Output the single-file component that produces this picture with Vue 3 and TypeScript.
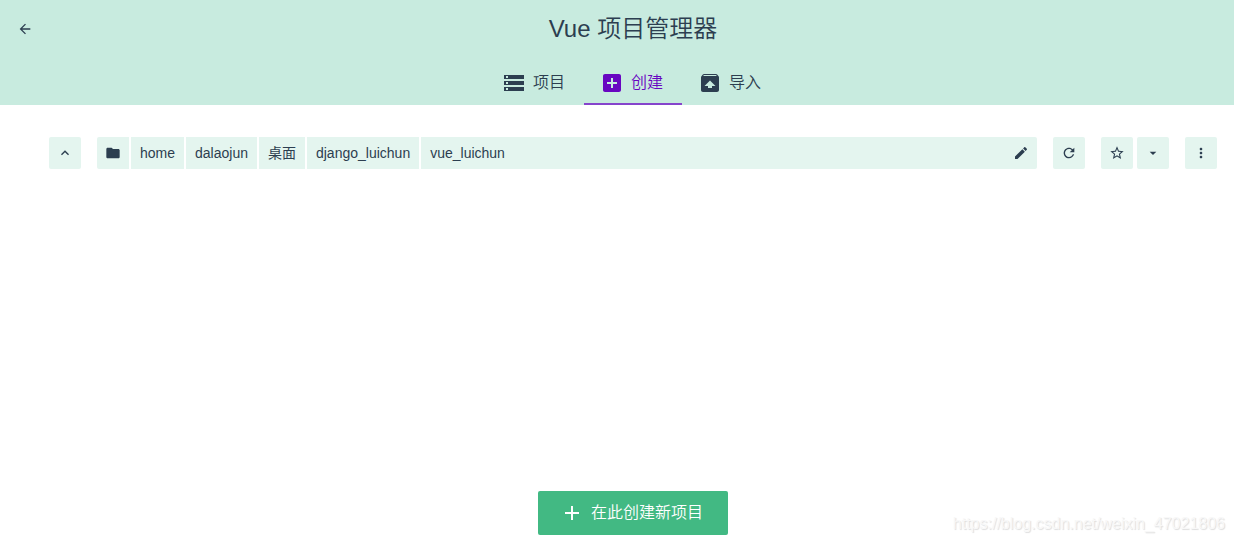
<script setup lang="ts">
import { ref } from 'vue'

interface Tab {
  id: string
  label: string
  icon: string
}

const icons = {
  back: 'M20 11H7.83l5.59-5.59L12 4l-8 8 8 8 1.41-1.41L7.83 13H20v-2z',
  up: 'M12 8l-6 6 1.41 1.41L12 10.83l4.59 4.58L18 14z',
  folder: 'M10 4H4c-1.1 0-1.99.9-1.99 2L2 18c0 1.1.9 2 2 2h16c1.1 0 2-.9 2-2V8c0-1.1-.9-2-2-2h-8l-2-2z',
  edit: 'M3 17.25V21h3.75L17.81 9.94l-3.75-3.75L3 17.25zM20.71 7.04c.39-.39.39-1.02 0-1.41l-2.34-2.34c-.39-.39-1.02-.39-1.41 0l-1.83 1.83 3.75 3.75 1.83-1.83z',
  refresh: 'M17.65 6.35C16.2 4.9 14.21 4 12 4c-4.42 0-7.99 3.58-7.99 8s3.57 8 7.99 8c3.73 0 6.84-2.55 7.73-6h-2.08c-.82 2.33-3.04 4-5.65 4-3.31 0-6-2.69-6-6s2.69-6 6-6c1.66 0 3.14.69 4.22 1.78L13 11h7V4l-2.35 2.35z',
  star: 'M22 9.24l-7.19-.62L12 2 9.19 8.63 2 9.24l5.46 4.73L5.82 21 12 17.27 18.18 21l-1.63-7.03L22 9.24zM12 15.4l-3.76 2.27 1-4.28-3.32-2.88 4.38-.38L12 6.1l1.71 4.04 4.38.38-3.32 2.88 1 4.28L12 15.4z',
  down: 'M7 10l5 5 5-5z',
  more: 'M12 8c1.1 0 2-.9 2-2s-.9-2-2-2-2 .9-2 2 .9 2 2 2zm0 2c-1.1 0-2 .9-2 2s.9 2 2 2 2-.9 2-2-.9-2-2-2zm0 6c-1.1 0-2 .9-2 2s.9 2 2 2 2-.9 2-2-.9-2-2-2z',
  plus: 'M19 13h-6v6h-2v-6H5v-2h6V5h2v6h6v2z'
}

const tabs: Tab[] = [
  {
    id: 'projects',
    label: '项目',
    icon: 'M2 20h20v-4H2v4zm2-3h2v2H4v-2zM2 4v4h20V4H2zm4 3H4V5h2v2zm-4 7h20v-4H2v4zm2-3h2v2H4v-2z'
  },
  {
    id: 'create',
    label: '创建',
    icon: 'M19 3H5c-1.11 0-2 .9-2 2v14c0 1.1.89 2 2 2h14c1.1 0 2-.9 2-2V5c0-1.1-.9-2-2-2zm-2 10h-4v4h-2v-4H7v-2h4V7h2v4h4v2z'
  },
  {
    id: 'import',
    label: '导入',
    icon: 'M20.55 5.22l-1.39-1.68C18.88 3.21 18.47 3 18 3H6c-.47 0-.88.21-1.15.55L3.46 5.22C3.17 5.57 3 6.01 3 6.5V19c0 1.1.89 2 2 2h14c1.1 0 2-.9 2-2V6.5c0-.49-.17-.93-.45-1.28zM12 9.5l5.5 5.5H14v2h-4v-2H6.5L12 9.5zM5.12 5l.82-1h12l.93 1H5.12z'
  }
]

const activeTab = ref('create')
const folders = ['home', 'dalaojun', '桌面', 'django_luichun', 'vue_luichun']
</script>

<template>
  <div class="page">
    <header class="header">
      <div class="title-bar">
        <button class="back" type="button" aria-label="返回">
          <svg class="icon" viewBox="0 0 24 24"><path :d="icons.back" /></svg>
        </button>
        <h1 class="title">Vue 项目管理器</h1>
      </div>
      <nav class="tabs">
        <button
          v-for="tab in tabs"
          :key="tab.id"
          type="button"
          class="tab"
          :class="{ active: tab.id === activeTab }"
          @click="activeTab = tab.id"
        >
          <svg class="icon large" viewBox="0 0 24 24"><path :d="tab.icon" /></svg>
          <span>{{ tab.label }}</span>
        </button>
      </nav>
    </header>

    <main class="content">
      <div class="toolbar">
        <button class="square" type="button" aria-label="上级目录">
          <svg class="icon" viewBox="0 0 24 24"><path :d="icons.up" /></svg>
        </button>
        <div class="path">
          <button class="square folder" type="button" aria-label="根目录">
            <svg class="icon" viewBox="0 0 24 24"><path :d="icons.folder" /></svg>
          </button>
          <button v-for="name in folders" :key="name" class="segment" type="button">{{ name }}</button>
          <button class="square edit" type="button" aria-label="编辑路径">
            <svg class="icon" viewBox="0 0 24 24"><path :d="icons.edit" /></svg>
          </button>
        </div>
        <button class="square" type="button" aria-label="刷新">
          <svg class="icon" viewBox="0 0 24 24"><path :d="icons.refresh" /></svg>
        </button>
        <div class="favorites">
          <button class="square" type="button" aria-label="收藏">
            <svg class="icon" viewBox="0 0 24 24"><path :d="icons.star" /></svg>
          </button>
          <button class="square" type="button" aria-label="收藏列表">
            <svg class="icon" viewBox="0 0 24 24"><path :d="icons.down" /></svg>
          </button>
        </div>
        <button class="square" type="button" aria-label="更多">
          <svg class="icon" viewBox="0 0 24 24"><path :d="icons.more" /></svg>
        </button>
      </div>
      <div class="actions">
        <button class="create" type="button">
          <svg class="icon large" viewBox="0 0 24 24"><path :d="icons.plus" /></svg>
          <span>在此创建新项目</span>
        </button>
      </div>
    </main>
    <div class="watermark">https://blog.csdn.net/weixin_47021806</div>
  </div>
</template>

<style>
body {
  background: #fff;
}
</style>

<style scoped>
.page {
  position: relative;
  box-sizing: border-box;
  min-height: 100vh;
  display: flex;
  flex-direction: column;
  font-family: "Liberation Sans", "Noto Sans CJK SC", sans-serif;
  font-size: 16px;
  color: #2c3e50;
}

button {
  margin: 0;
  padding: 0;
  border: 0;
  background: transparent;
  color: inherit;
  font: inherit;
  cursor: pointer;
}

.icon {
  display: block;
  flex: none;
  width: 16px;
  height: 16px;
  fill: currentColor;
}

.icon.large {
  width: 24px;
  height: 24px;
}

.header {
  background: #c8ebdf;
}

.title-bar {
  display: flex;
  align-items: center;
  height: 58px;
  padding: 0 9px;
}

.back {
  display: flex;
  align-items: center;
  justify-content: center;
  width: 32px;
  height: 32px;
}

.title {
  flex: 1;
  margin: 0;
  font-size: 24px;
  line-height: 32px;
  font-weight: 350;
  text-align: center;
}

.tabs {
  display: flex;
  justify-content: center;
  margin-left: 32px;
  padding-top: 3px;
}

.tab {
  display: flex;
  align-items: center;
  gap: 7px;
  box-sizing: border-box;
  height: 44px;
  padding: 2px 19px 0 16px;
  border-bottom: 2px solid transparent;
  line-height: 24px;
  font-weight: 350;
}

.tab.active {
  color: #6806c1;
  border-bottom-color: #8644cc;
}

.content {
  flex: 1;
  display: flex;
  flex-direction: column;
  justify-content: space-between;
  padding: 32px 17px 7px 49px;
}

.toolbar {
  display: flex;
  gap: 16px;
}

.square {
  display: flex;
  align-items: center;
  justify-content: center;
  flex: none;
  width: 32px;
  height: 32px;
  border-radius: 2px;
  background: #e4f5ef;
}

.path {
  flex: 1;
  display: flex;
  gap: 2px;
  min-width: 0;
  border-radius: 2px;
  overflow: hidden;
}

.path .square {
  border-radius: 0;
}

.segment {
  height: 32px;
  padding: 0 9px;
  background: #e4f5ef;
  font-size: 14px;
  line-height: 32px;
  white-space: nowrap;
}

.segment:nth-last-child(2) {
  flex: 1;
  text-align: left;
}

.edit {
  margin-left: -2px;
}

.favorites {
  display: flex;
  gap: 4px;
}

.actions {
  display: flex;
  justify-content: center;
}

.create {
  display: flex;
  align-items: center;
  gap: 7px;
  height: 44px;
  padding: 0 25px 0 22px;
  border-radius: 2px;
  background: #42b983;
  color: #fff;
  line-height: 24px;
  font-weight: 350;
}

.watermark {
  position: absolute;
  right: 9px;
  bottom: 8px;
  font-size: 16px;
  line-height: 20px;
  color: #f8f8f8;
  text-shadow: 1px 1px 1px #ddd;
  pointer-events: none;
}
</style>
